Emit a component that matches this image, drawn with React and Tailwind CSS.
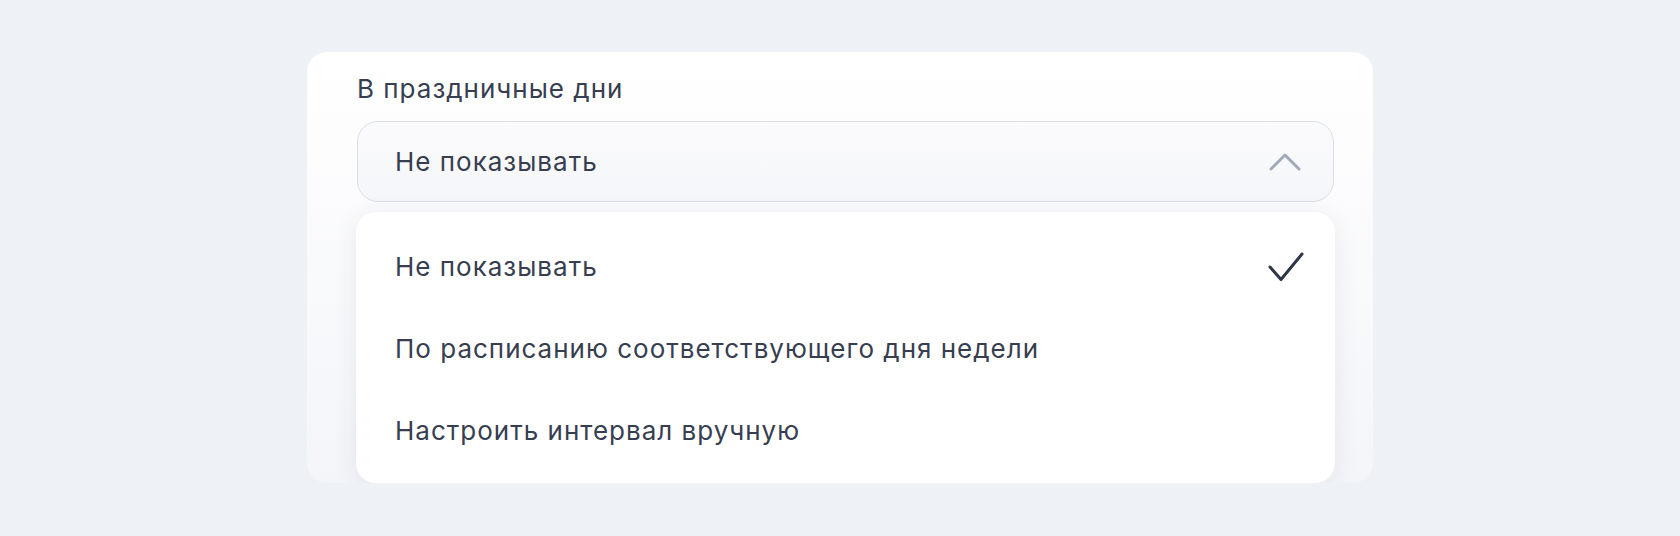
export default function App() {
  const items = [
    { label: "Не показывать", checked: true },
    { label: "По расписанию соответствующего дня недели" },
    { label: "Настроить интервал вручную" },
  ];
  const txt = "text-[26px] leading-[32px] tracking-[1px] text-[#373e50]";
  return (
    <div
      className="w-full h-[536px] bg-[#eef1f6] pt-[52px]"
      style={{ fontFamily: "Inter, 'Noto Sans', sans-serif" }}
    >
      <div className="mx-auto w-[1066px] h-[431px] overflow-hidden rounded-[20px] bg-gradient-to-b from-white to-[#f4f5f9] pl-[50px] pr-[39px] pt-[21px]">
        <div className={txt}>В праздничные дни</div>
        <div className="mt-[16px] h-[81px] rounded-[21px] border border-[#d9deea] bg-gradient-to-b from-[#fbfbfd] to-[#f5f6f9] flex items-center justify-between pl-[37px] pr-[32px]">
          <span className={txt}>Не показывать</span>
          <svg width="32" height="18" viewBox="0 0 32 18" fill="none">
            <polyline points="2,16 16,2 30,16" stroke="#a2a9ba" strokeWidth="3" strokeLinecap="round" strokeLinejoin="round" />
          </svg>
        </div>
        <div className="mt-[10px] -ml-px mr-[-1px] rounded-[20px] bg-white pt-[14px] pb-[11px] shadow-[0_4px_24px_rgba(40,50,90,0.09)]">
          {items.map((it) => (
            <div key={it.label} className="h-[82px] flex items-center justify-between pl-[39px] pr-[30px]">
              <span className={txt}>{it.label}</span>
              {it.checked && (
                <svg width="38" height="32" viewBox="0 0 38 32" fill="none">
                  <polyline points="3,16 14,28.5 35,3" stroke="#2e3648" strokeWidth="3" strokeLinecap="round" strokeLinejoin="round" />
                </svg>
              )}
            </div>
          ))}
        </div>
      </div>
    </div>
  );
}
